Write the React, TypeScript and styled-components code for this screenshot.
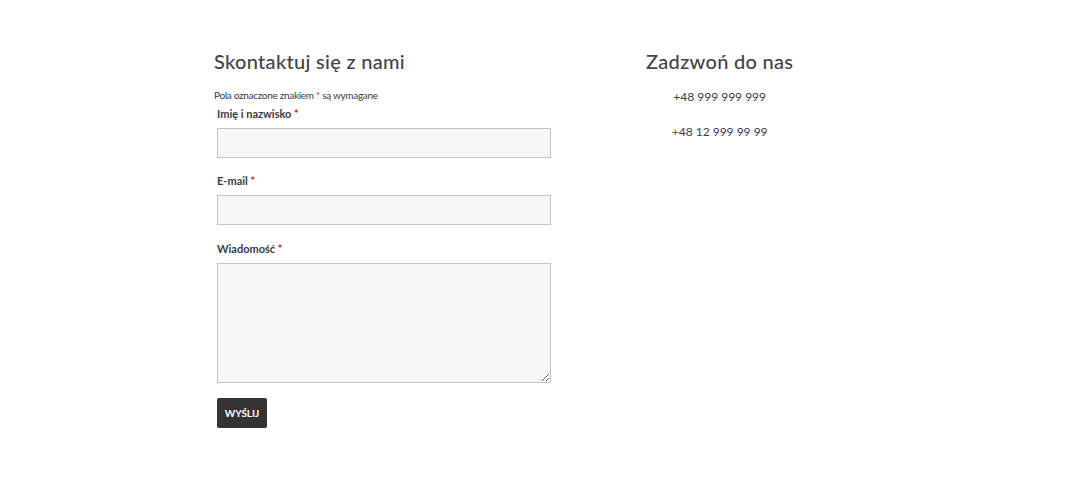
import React from 'react'
import styled, { createGlobalStyle } from 'styled-components'

const GlobalStyle = createGlobalStyle`
  body {
    margin: 0;
    background: #fff;
    font-family: Lato, "Liberation Sans", sans-serif;
    color: #3f3f46;
  }
`

const Page = styled.div`
  display: flex;
  padding: 49px 0 0 214px;
`

const FormColumn = styled.div`
  width: 432px;
`

const CallColumn = styled.div`
  display: flex;
  flex-direction: column;
  align-items: center;
`

const Heading = styled.h2`
  margin: 0;
  font-size: 20px;
  line-height: 24px;
  font-weight: 500;
  color: #44424a;
  letter-spacing: 0.3px;
`

const Note = styled.p`
  margin: 15px 0 4px;
  font-size: 10px;
  line-height: 14px;
  letter-spacing: -0.3px;
  color: #3a3a44;
`

const Star = styled.span`
  color: #e0161b;
`

const Field = styled.div<{ $gap?: number }>`
  display: flex;
  flex-direction: column;
  margin: 0 0 ${(p) => p.$gap ?? 15}px 3px;
  width: 334px;
`

const Label = styled.label`
  font-size: 11px;
  line-height: 16px;
  font-weight: 700;
  color: #3c3a48;
  margin-bottom: 6px;
`

const Input = styled.input`
  box-sizing: border-box;
  height: 30px;
  width: 100%;
  border: 1px solid #c4c4c4;
  background: #f6f6f6;
  padding: 0 8px;
  margin: 0;
  font: inherit;
`

const TextArea = styled.textarea`
  box-sizing: border-box;
  height: 120px;
  width: 100%;
  border: 1px solid #c4c4c4;
  background: #f6f6f6;
  padding: 8px;
  margin: 0;
  font: inherit;
  display: block;
`

const SubmitButton = styled.button`
  margin-left: 3px;
  width: 50px;
  height: 30px;
  border: none;
  border-radius: 2px;
  background: #333333;
  color: #fff;
  font-family: Lato, "Liberation Sans", sans-serif;
  font-size: 10px;
  font-weight: 700;
  text-transform: uppercase;
  padding: 0;
  cursor: pointer;
`

const Phone = styled.div`
  font-size: 12px;
  line-height: 20px;
  color: #3c3a48;
  margin-top: 14px;
  & + & {
    margin-top: 15px;
  }
`

const Plus = styled.span<{ $accent?: boolean }>`
  color: ${(p) => (p.$accent ? '#8a4b3c' : 'inherit')};
`

const phones = [
  { num: '48 999 999 999', accent: false },
  { num: '48 12 999 99 99', accent: true },
]

const App = () => {
  return (
    <>
      <GlobalStyle />
      <Page>
        <FormColumn>
          <Heading>Skontaktuj się z nami</Heading>
          <Note>
            Pola oznaczone znakiem <Star>*</Star> są wymagane
          </Note>
          <Field>
            <Label>
              Imię i nazwisko <Star>*</Star>
            </Label>
            <Input type="text" />
          </Field>
          <Field $gap={16}>
            <Label>
              E-mail <Star>*</Star>
            </Label>
            <Input type="email" />
          </Field>
          <Field>
            <Label>
              Wiadomość <Star>*</Star>
            </Label>
            <TextArea />
          </Field>
          <SubmitButton>Wyślij</SubmitButton>
        </FormColumn>
        <CallColumn>
          <Heading>Zadzwoń do nas</Heading>
          {phones.map((p) => (
            <Phone key={p.num}>
              <Plus $accent={p.accent}>+</Plus>
              {p.num}
            </Phone>
          ))}
        </CallColumn>
      </Page>
    </>
  )
}

export default App
